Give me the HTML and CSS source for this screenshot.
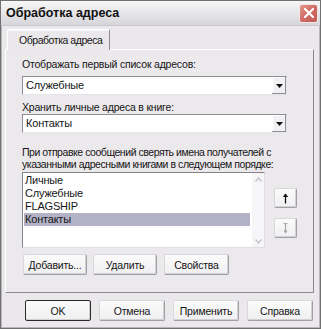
FILE: index.html
```html
<!DOCTYPE html>
<html lang="ru">
<head>
<meta charset="utf-8">
<title>Обработка адреса</title>
<link rel="stylesheet" href="styles.css">
</head>
<body>
<div class="window">
  <div class="titlebar">
    <span class="title">Обработка адреса</span>
    <span class="close">
      <svg width="12" height="12" viewBox="0 0 12 12"><path d="M2 2 L10 10 M10 2 L2 10" stroke="#fff" stroke-width="2.2" stroke-linecap="round"/></svg>
    </span>
  </div>
  <div class="client">
    <div class="tabs"><div class="tab">Обработка адреса</div></div>
    <div class="panel">
      <div class="label">Отображать первый список адресов:</div>
      <div class="combo">
        <span class="value">Служебные</span>
        <span class="dd"><svg width="7" height="4" viewBox="0 0 7 4"><path d="M0 0 H7 L3.5 4 Z" fill="#111"/></svg></span>
      </div>
      <div class="label l2">Хранить личные адреса в книге:</div>
      <div class="combo">
        <span class="value">Контакты</span>
        <span class="dd"><svg width="7" height="4" viewBox="0 0 7 4"><path d="M0 0 H7 L3.5 4 Z" fill="#111"/></svg></span>
      </div>
      <p class="para">При отправке сообщений сверять имена получателей с<br>указанными адресными книгами в следующем порядке:</p>
      <div class="listrow">
        <div class="listbox">
          <ul class="items">
            <li>Личные</li>
            <li>Служебные</li>
            <li>FLAGSHIP</li>
            <li class="sel">Контакты</li>
          </ul>
          <div class="scroll">
            <svg width="7" height="5" viewBox="0 0 7 5"><path d="M0.5 4.5 L3.5 1 L6.5 4.5" fill="none" stroke="#c4c4cc" stroke-width="1.4"/></svg>
            <svg width="7" height="5" viewBox="0 0 7 5"><path d="M0.5 0.5 L3.5 4 L6.5 0.5" fill="none" stroke="#c4c4cc" stroke-width="1.4"/></svg>
          </div>
        </div>
        <div class="side">
          <button class="btn sq">
            <svg width="7" height="11" viewBox="0 0 7 11"><path d="M3.5 1 V10.5" stroke="#111" stroke-width="1.3"/><path d="M0.8 4 L3.5 0.6 L6.2 4 Z" fill="#111"/></svg>
          </button>
          <button class="btn sq">
            <svg width="7" height="11" viewBox="0 0 7 11"><path d="M3.5 0.5 V10" stroke="#a4a4a8" stroke-width="1.2"/><path d="M1.5 7.5 L3.5 10.4 L5.5 7.5 Z" fill="#a4a4a8"/><path d="M1.5 0.6 H5.5" stroke="#a4a4a8" stroke-width="1"/></svg>
          </button>
        </div>
      </div>
      <div class="actions">
        <button class="btn">Добавить...</button>
        <button class="btn">Удалить</button>
        <button class="btn">Свойства</button>
      </div>
    </div>
    <div class="footer">
      <button class="btn default">OK</button>
      <button class="btn">Отмена</button>
      <button class="btn">Применить</button>
      <button class="btn">Справка</button>
    </div>
  </div>
</div>
</body>
</html>
```

FILE: styles.css
```css
* { box-sizing: border-box; }

html, body {
  margin: 0;
  padding: 0;
  background: #ebe8eb;
}

body {
  font-family: "Liberation Sans", Arial, sans-serif;
  font-size: 10.5px;
  letter-spacing: -0.2px;
  color: #161616;
}

.window {
  width: 321px;
  height: 329px;
  border: 1px solid #707070;
  background: #ebe8eb;
  box-shadow: inset 1px 0 0 #b8b6b8, inset -1px 0 0 #b8b6b8, inset 0 -1px 0 #b8b6b8;
}

.titlebar {
  height: 25px;
  display: flex;
  align-items: center;
  justify-content: space-between;
  padding: 0 2px 0 5px;
  background: linear-gradient(#f7f7f8 0%, #e8e7ea 45%, #d6d5d9 100%);
  border-bottom: 1px solid #c9c7cb;
}

.title {
  font-weight: bold;
  font-size: 12.5px;
  letter-spacing: 0;
  color: #111;
}

.close {
  width: 19px;
  height: 19px;
  border: 1px solid #f2e6e6;
  border-radius: 3px;
  background: linear-gradient(135deg, #e3998e 0%, #d06a62 50%, #c25a56 100%);
  display: flex;
  align-items: center;
  justify-content: center;
}

.client {
  padding: 3px 6px 0 4px;
}

.tabs {
  display: flex;
  padding-left: 2px;
  position: relative;
  z-index: 1;
  margin-bottom: -1px;
}

.tab {
  height: 21px;
  line-height: 20px;
  padding: 0 7px 0 11px;
  letter-spacing: -0.45px;
  background: #ebe8eb;
  border: 1px solid #ffffff;
  border-right: 1px solid #8d8b8f;
  border-bottom: none;
  border-radius: 2px 2px 0 0;
  box-shadow: inset 0 1px 0 #f7f6f7;
}

.panel {
  height: 244px;
  border: 1px solid #ffffff;
  border-right-color: #8a888c;
  border-bottom-color: #8a888c;
  padding: 8px 0 0 16px;
  background: #ece9ec;
}

.label {
  height: 13px;
  line-height: 13px;
}

.l2 {
  margin-top: 6px;
}

.combo {
  margin-top: 5px;
  width: 265px;
  height: 19px;
  display: flex;
  align-items: stretch;
  background: #fff;
  border: 1px solid #8e8d91;
  border-right-color: #e6e5e8;
  border-bottom-color: #e6e5e8;
}

.l2 + .combo {
  margin-top: 0;
}

.value {
  flex: 1;
  padding-left: 3px;
  line-height: 17px;
  font-size: 11px;
}

.dd {
  width: 15px;
  display: flex;
  align-items: center;
  justify-content: center;
  background: #f1f0f2;
  border-left: 1px solid #fff;
  box-shadow: inset -1px -1px 0 #8f8e92, inset 1px 1px 0 #fff;
}

.para {
  margin: 13px 0 0 0;
  line-height: 12px;
  letter-spacing: -0.45px;
}

.listrow {
  display: flex;
  align-items: flex-start;
  margin-top: 2px;
}

.listbox {
  width: 243px;
  height: 76px;
  display: flex;
  background: #fff;
  border: 1px solid #848387;
  border-right-color: #e0dfe2;
  border-bottom-color: #e0dfe2;
}

.items {
  flex: 1;
  list-style: none;
  margin: 0;
  padding: 1px 2px 0 1px;
}

.items li {
  height: 13px;
  line-height: 13px;
  padding-left: 1px;
  font-size: 11px;
}

.items li.sel {
  background: #b3b2c6;
}

.scroll {
  width: 12px;
  display: flex;
  flex-direction: column;
  justify-content: space-between;
  align-items: center;
  padding: 4px 0 3px;
  background: #f6f6f8;
}

.side {
  display: flex;
  flex-direction: column;
  gap: 10px;
  margin-left: 9px;
  padding-top: 16px;
}

.btn {
  font-family: "Liberation Sans", Arial, sans-serif;
  font-size: 10.5px;
  letter-spacing: -0.2px;
  color: #161616;
  height: 21px;
  width: 64px;
  padding: 0;
  background: linear-gradient(#fbfbfb, #f0eff1);
  border: 1px solid #a09fa3;
  border-top-color: #d8d7da;
  border-left-color: #d8d7da;
  border-radius: 2px;
  box-shadow: inset -1px -1px 0 #d2d1d4;
  display: flex;
  align-items: center;
  justify-content: center;
}

.sq {
  width: 23px;
  height: 20px;
}

.actions {
  display: flex;
  gap: 6px;
  margin-top: 6px;
  padding-left: 1px;
}

.actions .btn:nth-child(3) { margin-left: 1px; width: 65px; }

.footer {
  display: flex;
  justify-content: flex-end;
  gap: 8px;
  margin-top: 7px;
  padding-right: 1px;
}

.footer .btn {
  width: 66px;
  height: 21px;
}

.footer .default {
  border: 1px solid #2a2a2a;
}
```
